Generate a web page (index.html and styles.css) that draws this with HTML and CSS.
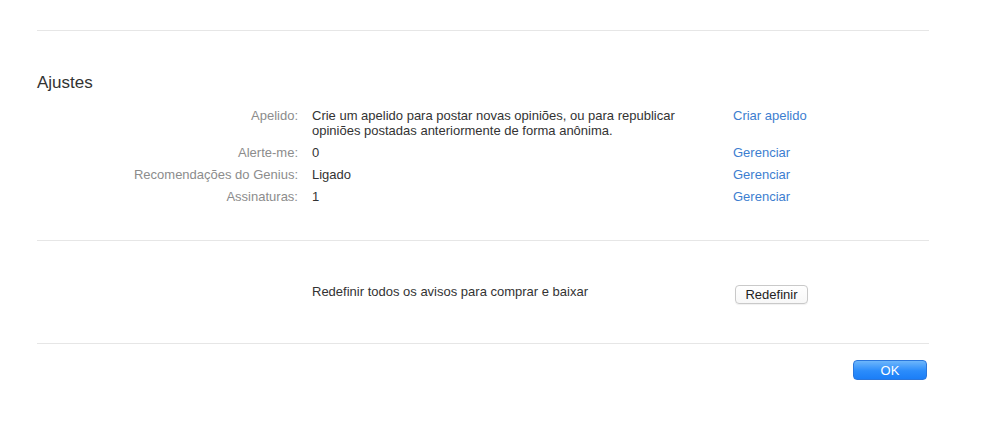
FILE: index.html
```html
<!DOCTYPE html>
<html lang="pt">
<head>
<meta charset="utf-8">
<title>Ajustes</title>
<link rel="stylesheet" href="styles.css">
</head>
<body>
<div class="page">
  <hr class="sep">
  <h2 class="title">Ajustes</h2>
  <div class="settings">
    <div class="label">Apelido:</div>
    <div class="value"><span class="wrap">Crie um apelido para postar novas opiniões, ou para republicar opiniões postadas anteriormente de forma anônima.</span></div>
    <div class="action"><a class="link" href="#">Criar apelido</a></div>

    <div class="label">Alerte-me:</div>
    <div class="value">0</div>
    <div class="action"><a class="link" href="#">Gerenciar</a></div>

    <div class="label">Recomendações do Genius:</div>
    <div class="value">Ligado</div>
    <div class="action"><a class="link" href="#">Gerenciar</a></div>

    <div class="label">Assinaturas:</div>
    <div class="value">1</div>
    <div class="action"><a class="link" href="#">Gerenciar</a></div>
  </div>
  <hr class="sep">
  <div class="settings reset">
    <div class="label"></div>
    <div class="value">Redefinir todos os avisos para comprar e baixar</div>
    <div class="action"><button class="btn">Redefinir</button></div>
  </div>
  <hr class="sep">
  <div class="footer">
    <button class="btn-ok">OK</button>
  </div>
</div>
</body>
</html>
```

FILE: styles.css
```css
html, body {
  margin: 0;
  padding: 0;
  background: #ffffff;
}
body {
  font-family: "Liberation Sans", Arial, sans-serif;
  font-size: 13px;
  color: #333333;
}
.page {
  padding: 30px 55px 0 37px;
}
.sep {
  margin: 0;
  border: 0;
  height: 1px;
  background: #e6e6e6;
}
.title {
  margin: 42px 0 0 0;
  font-size: 17px;
  line-height: 20px;
  font-weight: normal;
  color: #333333;
}
.settings {
  display: grid;
  grid-template-columns: 261px 407px 1fr;
  column-gap: 14px;
  row-gap: 7px;
  margin: 15px 0 36px 0;
  line-height: 15px;
}
.label {
  text-align: right;
  color: #8c8c8c;
}
.value {
  color: #333333;
}
.wrap {
  display: block;
  max-width: 385px;
}
.action {
  padding-left: 0;
}
.link {
  color: #3d7ed0;
  text-decoration: none;
}
.reset {
  margin: 43px 0 39px 0;
}
.reset .action {
  padding-left: 2px;
}
.btn {
  display: block;
  margin-top: 1px;
  width: 73px;
  height: 19px;
  padding: 0;
  border: 1px solid #c9c9c9;
  border-radius: 4px;
  background: linear-gradient(#ffffff, #f7f7f7);
  box-shadow: 0 1px 1px rgba(0,0,0,0.06);
  font-family: "Liberation Sans", Arial, sans-serif;
  font-size: 13px;
  color: #222222;
}
.footer {
  display: flex;
  justify-content: flex-end;
  padding: 16px 2px 0 0;
}
.btn-ok {
  width: 74px;
  height: 20px;
  padding: 0;
  border: 1px solid #2a76dc;
  border-radius: 4px;
  background: linear-gradient(#6db6fb, #2b8cfb 55%, #1b7ef7);
  font-family: "Liberation Sans", Arial, sans-serif;
  font-size: 13px;
  color: #ffffff;
}
```
